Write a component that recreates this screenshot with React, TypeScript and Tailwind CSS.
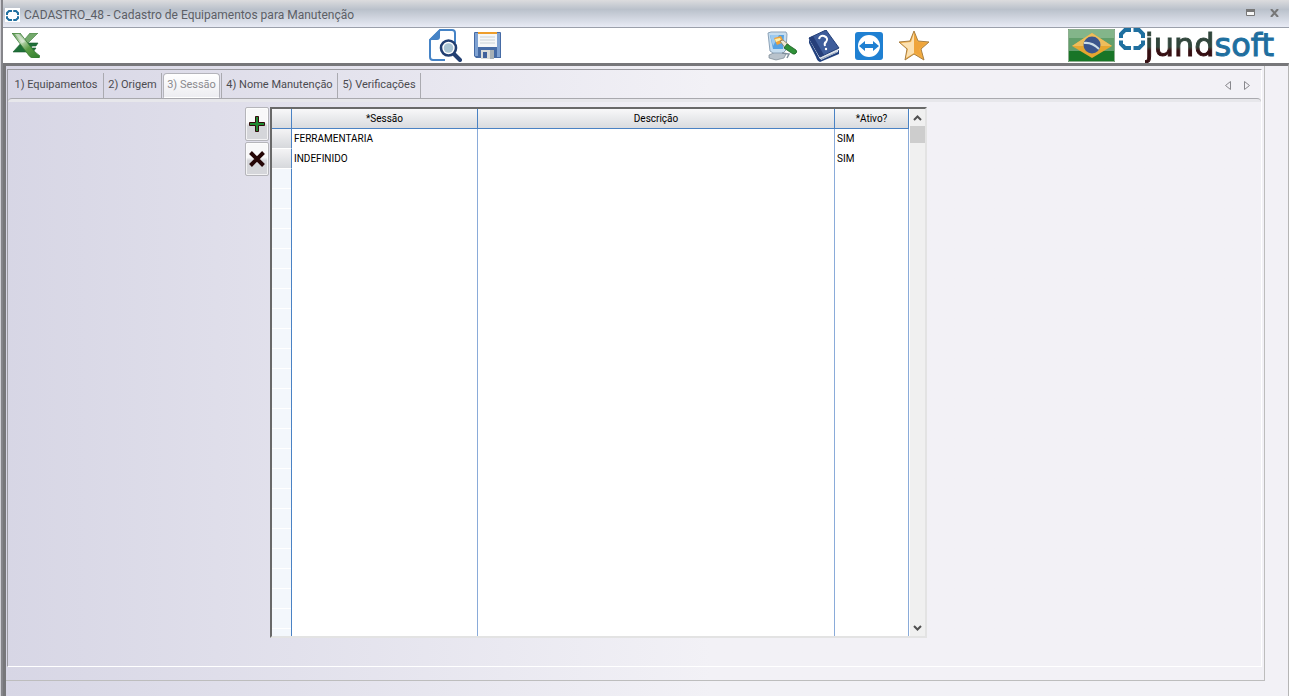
import { useState } from 'react'

const tabs = [
  { label: '1) Equipamentos', className: 'w-[95px]' },
  { label: '2) Origem', className: 'w-[58px]' },
  { label: '3) Sessão', className: 'w-[57px]' },
  { label: '4) Nome Manutenção', className: 'w-[117px]' },
  { label: '5) Verificações', className: 'w-[83px]' },
]

const rows = [
  { sessao: 'FERRAMENTARIA', descricao: '', ativo: 'SIM' },
  { sessao: 'INDEFINIDO', descricao: '', ativo: 'SIM' },
]

function RingIcon({ className }: { className: string }) {
  return (
    <svg viewBox="0 0 26 22" className={className} fill="none" stroke="#1f6f9f" strokeWidth="4">
      <path d="M12 2H6L2 6v4M14.500 2H20l4 4v4M2 12.500V16l4 4h6M24 12.500V16l-4 4h-5.500" />
    </svg>
  )
}

function ExcelIcon() {
  return (
    <svg viewBox="0 0 28 25" className="h-[25px] w-7">
      <defs>
        <linearGradient id="xl" x1="0" y1="0" x2="1" y2="1">
          <stop offset="0" stopColor="#5f9a55" />
          <stop offset=".35" stopColor="#c3dcba" />
          <stop offset=".6" stopColor="#5b9c45" />
          <stop offset="1" stopColor="#2f7d2c" />
        </linearGradient>
      </defs>
      <path d="M18 0h8L12 14 8 12z" fill="#74a96c" stroke="#3b7838" strokeWidth=".6" />
      <path d="M16 10h10l-2 3h-4l-1 2h5l-3 4H1l9-10z" fill="#1f7038" stroke="#195c2d" strokeWidth=".6" />
      <path d="M0 0h8l10 13q5 7 10 10l-1 2h-6q-3 0-6-5z" fill="url(#xl)" stroke="#397b34" strokeWidth=".8" />
      <path d="M3 1h4l6 8-3 1z" fill="#e2ecdf" opacity=".6" />
    </svg>
  )
}

function PreviewIcon() {
  return (
    <svg viewBox="0 0 33 33" className="h-[33px] w-[33px]" fill="none">
      <path d="M26 14V4q0-3-3-3H11L1 11v17q0 3 3 3h12" fill="#fff" stroke="#4583c6" strokeWidth="2" />
      <path d="M11 0v8q0 3-3 3H0z" fill="#4583c6" />
      <path d="m25 25 6 6" stroke="#223f72" strokeWidth="4" strokeLinecap="round" />
      <circle cx="19.500" cy="19" r="7.500" fill="#fff" stroke="#223f72" strokeWidth="2.600" />
      <circle cx="19.500" cy="19" r="4.800" fill="#a9c3d3" />
    </svg>
  )
}

function SaveIcon() {
  return (
    <svg viewBox="0 0 27 27" className="h-[27px] w-[27px]">
      <path d="M1 0h25q1 0 1 1v25H2l-2-2V1q0-1 1-1z" fill="#466ba5" />
      <path d="M1 1h3v23H1zM23 1h3v24h-3z" fill="#7fa2d2" />
      <path d="M4 0h19v15H4z" fill="#f5f7f8" />
      <path d="M4 0h19v2H4z" fill="#ee9e2c" />
      <path d="M6 5h15M6 8h15M6 11h15" stroke="#c9d2d7" />
      <path d="M7 18h13v9H7z" fill="#d9dbd9" />
      <path d="M9 20h4v6H9z" fill="#3f609b" />
      <path d="M16 18h4v9h-4z" fill="#a7b0b5" />
    </svg>
  )
}

function PaintIcon() {
  return (
    <svg viewBox="0 0 32 30" className="h-[30px] w-8">
      <path d="m3 24 9-4 8 3-2 4-8 2-7-2z" fill="#b9c3cc" stroke="#758591" strokeWidth=".7" />
      <path d="m2 2 3-1h15l1 2-1 16-3 3H7L4 20z" fill="#c6ddef" stroke="#8da3b8" />
      <path d="M4 4h14l-1 14H7z" fill="#56a2e3" />
      <path d="m4 4 9 0-6 11z" fill="#9dcaf0" />
      <path d="m8 7 7-2 3 6-7 3z" fill="#f0a238" />
      <path d="m9 8 5-1 1 2-5 2z" fill="#fff0a8" />
      <path d="m14 10 3-1 6 5-3 4z" fill="#eee7d4" stroke="#806b48" strokeWidth=".7" />
      <path d="m21 13 9 6q2 2-1 4h-2l-9-6z" fill="#2f9138" stroke="#185d21" strokeWidth=".8" />
      <path d="m16 22 7 1-2 4" fill="none" stroke="#80909d" strokeWidth="1.500" />
    </svg>
  )
}

function HelpIcon() {
  return (
    <svg viewBox="0 0 32 32" className="h-8 w-8">
      <path d="m1 9 11 20 19-9v4L12 32Q9 31 8 27L1 13z" fill="#22417e" />
      <path d="m12 27 18-9v4l-17 8z" fill="#dfe4ec" />
      <path d="m13 29 16-7" stroke="#98a7bb" />
      <path d="M1 8 18 0l13 18-19 9z" fill="#3e5d9b" stroke="#223f78" />
      <path d="M1 8 5 6l11 19-4 2z" fill="#263f7a" />
      <path d="M11 9q1-4 5-3 5 2 2 6-2 1-1 4" fill="none" stroke="#fff" strokeWidth="2" />
      <circle cx="18" cy="19" r="1.200" fill="#fff" />
    </svg>
  )
}

function RemoteIcon() {
  return (
    <svg viewBox="0 0 28 28" className="h-7 w-7">
      <rect width="28" height="28" rx="3" fill="#1f80d2" />
      <circle cx="14" cy="14" r="11" fill="#fff" />
      <path d="m4 14 6-5v3h8V9l6 5-6 5v-3h-8v3z" fill="#1f80d2" />
    </svg>
  )
}

function StarIcon() {
  return (
    <svg viewBox="0 0 32 31" className="h-[31px] w-8">
      <path d="m16 1 4 10 11 1-8 7 3 11-10-6-9 6 2-11-8-7 11-1z" fill="#f3ad42" stroke="#a98043" strokeWidth="1" />
      <path d="M16 3v20l-8 5 2-9-7-6 10-1z" fill="#fbe1b2" />
      <path d="m16 3 3 9 9 1-7 6 2 7-7-4z" fill="#efa43a" />
    </svg>
  )
}

function FlagIcon() {
  return (
    <svg viewBox="0 0 47 33" className="h-[33px] w-[47px]">
      <path d="M0 0h47v33H0z" fill="#187527" />
      <path d="M1 1h45v21H1z" fill="#619e6b" />
      <path d="M1 1h45v8H1z" fill="#83b58a" />
      <path d="M4 17 24 4l20 13-20 12z" fill="#e6a62f" />
      <path d="M4 17 24 4l20 13z" fill="#edbd5c" />
      <circle cx="24" cy="16" r="8.500" fill="#3c558c" />
      <path d="M16 14q8-1 15 6" fill="none" stroke="#cddde7" strokeWidth="2" />
      <path d="M.5.500h46v32H.5z" fill="none" stroke="#8eae90" />
    </svg>
  )
}

function ToolButton({ label, children }: { label: string; children: React.ReactNode }) {
  return (
    <button type="button" aria-label={label} title={label} className="flex shrink-0 items-center">
      {children}
    </button>
  )
}

function TitleBar() {
  return (
    <header className="flex h-7 shrink-0 items-center border-b border-[#9ba0ab] bg-linear-to-b from-[#dcdcde] via-[#bac1cb] via-35% to-[#e8ebf5] pl-[2px] pr-[10px] pt-[3px]">
      <span className="flex h-[14px] w-[15px] items-center justify-center bg-white">
        <RingIcon className="h-[11px] w-[13px]" />
      </span>
      <h1 className="ml-1 flex-1 font-['Roboto',sans-serif] text-xs text-[#5c5f66]">
        CADASTRO_48 - Cadastro de Equipamentos para Manutenção
      </h1>
      <button type="button" aria-label="Maximizar" className="mr-[15px]">
        <svg viewBox="0 0 9 8" className="mb-1 h-2 w-[9px]">
          <path d="M.5.500h8v6h-8z" fill="#f7f7f7" stroke="#777" />
          <path d="M0 0h9v3H0z" fill="#777" />
        </svg>
      </button>
      <button type="button" aria-label="Fechar">
        <svg viewBox="0 0 9 8" className="mb-1 h-2 w-[9px]" stroke="#777" strokeWidth="2">
          <path d="m1 0 7 8M8 0 1 8" />
        </svg>
      </button>
    </header>
  )
}

function Toolbar() {
  return (
    <div className="flex h-[35px] shrink-0 items-center bg-white pl-[9px] pr-[15px]">
      <div className="w-[417px]">
        <ToolButton label="Excel"><ExcelIcon /></ToolButton>
      </div>
      <div className="flex flex-1 items-center gap-[12px]">
        <ToolButton label="Pesquisar"><PreviewIcon /></ToolButton>
        <ToolButton label="Salvar"><SaveIcon /></ToolButton>
      </div>
      <div className="mr-[138px] flex items-center gap-[15px]">
        <div className="flex items-center gap-[10px]">
          <ToolButton label="Aparência"><PaintIcon /></ToolButton>
          <ToolButton label="Ajuda"><HelpIcon /></ToolButton>
        </div>
        <ToolButton label="Suporte remoto"><RemoteIcon /></ToolButton>
        <ToolButton label="Favoritos"><StarIcon /></ToolButton>
      </div>
      <div className="flex items-center self-stretch">
        <FlagIcon />
        <RingIcon className="ml-1 h-[22px] w-[26px] self-start" />
        <span className="font-['DejaVu_Sans',sans-serif] text-[32px] leading-[35px]">
          <span className="bg-linear-to-b from-[#31463c] from-55% to-[#350e12] to-65% bg-clip-text text-transparent [-webkit-text-stroke:1px_transparent]">jund</span>
          <span className="text-[#1f6f9f] [-webkit-text-stroke:1px_#1f6f9f]">soft</span>
        </span>
      </div>
    </div>
  )
}

function TabStrip() {
  const [active, setActive] = useState(2)
  return (
    <div className="flex h-[28px] shrink-0 items-stretch pl-px pt-[3px]">
      <div role="tablist" className="flex flex-1 font-['Roboto',sans-serif] text-[11px]">
        {tabs.map((tab, i) => (
          <button
            key={tab.label}
            type="button"
            role="tab"
            aria-selected={i === active}
            onClick={() => setActive(i)}
            className={
              i === active
                ? `${tab.className} mx-px rounded-t border border-[#b4b4bb] border-b-transparent bg-linear-to-b from-white to-[#ededf1] text-[#8a8a8e]`
                : `${tab.className} border-r border-[#aaaab0] text-[#4b4b50] ${i === active + 1 ? 'border-l' : ''}`
            }
          >
            {tab.label}
          </button>
        ))}
      </div>
      <div className="flex items-center gap-[13px] pr-[11px]">
        <button type="button" aria-label="Aba anterior">
          <svg viewBox="0 0 6 9" className="h-[9px] w-[6px]" fill="none" stroke="#88888d">
            <path d="M5.500.500v8l-5-4z" />
          </svg>
        </button>
        <button type="button" aria-label="Próxima aba">
          <svg viewBox="0 0 6 9" className="h-[9px] w-[6px]" fill="none" stroke="#88888d">
            <path d="M.5.500v8l5-4z" />
          </svg>
        </button>
      </div>
    </div>
  )
}

function ScrollArrow({ up }: { up?: boolean }) {
  return (
    <button type="button" aria-label={up ? 'Rolar para cima' : 'Rolar para baixo'} className="flex h-[17px] items-center justify-center">
      <svg viewBox="0 0 9 6" className="h-[6px] w-[9px]" fill="none" stroke="#505050" strokeWidth="2">
        <path d={up ? 'm1 5 3.500-3.500L8 5' : 'm1 1 3.500 3.500L8 1'} />
      </svg>
    </button>
  )
}

function SessaoGrid() {
  const head = 'h-[20px] border-b border-r border-[#4a82c4] bg-linear-to-b from-[#f8f8f9] to-[#d9dbdf] p-0 pt-px font-normal'
  const cell = 'h-[20px] border-r border-[#8aabd9] p-0 pl-[2px]'
  return (
    <div className="flex min-w-0 flex-1 border-2 border-b-[#e3e3e3] border-l-[#696969] border-r-[#e3e3e3] border-t-[#696969] bg-white">
      <table className="h-full flex-1 table-fixed border-separate border-spacing-0 font-['Roboto',sans-serif] text-[10px] leading-[18px] text-black">
        <colgroup>
          <col className="w-[20px]" />
          <col className="w-[186px]" />
          <col />
          <col className="w-[74px]" />
        </colgroup>
        <thead>
          <tr>
            <th className={head} />
            <th className={head}>*Sessão</th>
            <th className={head}>Descrição</th>
            <th className={head}>*Ativo?</th>
          </tr>
        </thead>
        <tbody>
          {rows.map((row) => (
            <tr key={row.sessao}>
              <td className="h-[20px] border-b border-r border-b-white border-r-[#4a82c4] bg-linear-to-b from-[#f4f4f5] to-[#d6d8dc] p-0" />
              <td className={cell}>{row.sessao}</td>
              <td className={cell}>{row.descricao}</td>
              <td className={cell}>{row.ativo}</td>
            </tr>
          ))}
          <tr className="h-full">
            <td className="border-r border-[#4a82c4] bg-[repeating-linear-gradient(#f3f7fc_0_19px,white_19px_20px)] p-0" />
            <td className={cell} />
            <td className={cell} />
            <td className={cell} />
          </tr>
        </tbody>
      </table>
      <div className="ml-px flex w-[15px] flex-col bg-[#f0f0f0]">
        <ScrollArrow up />
        <div className="h-[17px] bg-[#cdcdcd]" />
        <div className="flex-1" />
        <ScrollArrow />
      </div>
    </div>
  )
}

function EditButton({ label, children }: { label: string; children: React.ReactNode }) {
  return (
    <button
      type="button"
      aria-label={label}
      className="flex h-[34px] w-6 items-center justify-center rounded-xs border border-[#b5b5ba] bg-linear-to-b from-[#f8f8f9] from-45% to-[#d5d6da] to-55% inset-ring inset-ring-white/70"
    >
      {children}
    </button>
  )
}

export default function App() {
  return (
    <div className="flex h-screen flex-col border-l border-[#d0d0d6] bg-[#f2f1f6] font-['Liberation_Sans',sans-serif] text-[11px]">
      <div className="flex min-h-0 flex-1 flex-col border-l-2 border-[#85858a]">
        <TitleBar />
        <Toolbar />
        <main className="flex min-h-0 flex-1 flex-col border-l-3 border-r border-t-3 border-[#77777a] border-r-[#b5b5b5] bg-linear-to-r from-[#d7d6e5] to-[#f2f1f6] to-55% pb-[15px] pr-[23px]">
          <div className="flex min-h-0 flex-1 flex-col border-b border-r border-[#bdbdbd] pb-[13px] pl-px pr-[2px] pt-[3px]">
            <div className="flex min-h-0 flex-1 flex-col border border-b-white border-l-[#9a9aa0] border-r-white border-t-[#9a9aa0]">
              <TabStrip />
              <div className="h-1 shrink-0 rounded-t border-t border-[#a9a9ae] bg-[#e7e7eb]" />
              <section className="flex min-h-0 flex-1 pb-[28px] pl-[237px] pt-[5px]">
                <div className="flex w-full max-w-[682px] gap-px">
                  <div className="flex flex-col gap-px">
                    <EditButton label="Adicionar">
                      <svg viewBox="0 0 16 16" className="h-4 w-4">
                        <path d="M6.500.500h3v6h6v3h-6v6h-3v-6h-6v-3h6z" fill="#1f8a32" stroke="#330b0b" />
                      </svg>
                    </EditButton>
                    <EditButton label="Remover">
                      <svg viewBox="0 0 16 16" className="h-4 w-4" stroke="#250606" strokeWidth="4">
                        <path d="m1.500 1.500 13 13M14.500 1.500l-13 13" />
                      </svg>
                    </EditButton>
                  </div>
                  <SessaoGrid />
                </div>
              </section>
            </div>
          </div>
        </main>
      </div>
    </div>
  )
}
